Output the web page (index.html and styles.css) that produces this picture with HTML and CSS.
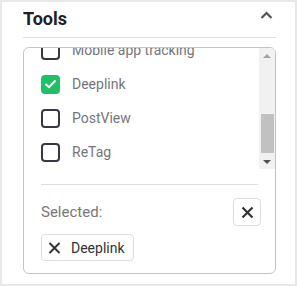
FILE: index.html
```html
<!DOCTYPE html>
<html lang="en">
<head>
    <meta charset="UTF-8">
    <meta name="viewport" content="width=device-width, initial-scale=1.0">
    <title>Tools</title>
    <link rel="stylesheet" href="styles.css">
</head>
<body>

<div class="panel">
    <div class="panel-head">
        <h2>Tools</h2>
        <svg class="chevron" width="13" height="8" viewBox="0 0 13 8">
            <polyline points="1.5,7 6.5,2 11.5,7" fill="none" stroke="#555" stroke-width="2.2"/>
        </svg>
    </div>

    <div class="picker">
        <div class="list-wrap">
            <ul class="options">
                <li><span class="box"></span>Mobile app tracking</li>
                <li><span class="box checked">
                    <svg width="13" height="10" viewBox="0 0 13 10">
                        <polyline points="1.5,5 5,8.2 11.5,1.5" fill="none" stroke="#fff" stroke-width="2"/>
                    </svg>
                </span>Deeplink</li>
                <li><span class="box"></span>PostView</li>
                <li><span class="box"></span>ReTag</li>
            </ul>
            <div class="scrollbar">
                <div class="sb-btn"><span class="arrow-up"></span></div>
                <div class="sb-track"><div class="sb-thumb"></div></div>
                <div class="sb-btn"><span class="arrow-down"></span></div>
            </div>
        </div>

        <div class="picker-foot">
            <div class="sep"></div>
            <div class="selected-row">
                <span class="selected-label">Selected:</span>
                <button class="clear">
                    <svg width="13" height="13" viewBox="0 0 13 13">
                        <path d="M1.5 1.5 L11.5 11.5 M11.5 1.5 L1.5 11.5" stroke="#333" stroke-width="2.2"/>
                    </svg>
                </button>
            </div>
            <div class="chips">
                <span class="chip">
                    <svg width="13" height="12" viewBox="0 0 13 12">
                        <path d="M1.5 1 L11.5 11 M11.5 1 L1.5 11" stroke="#333" stroke-width="2"/>
                    </svg>
                    Deeplink
                </span>
            </div>
        </div>
    </div>
</div>

</body>
</html>
```

FILE: styles.css
```css
body {
    font-family: Roboto, "Liberation Sans", sans-serif;
    margin: 0;
    padding: 0;
    background-color: white;
}

.panel {
    box-sizing: border-box;
    width: 297px;
    height: 286px;
    border: 2px solid #e8e8e8;
    padding: 0 19px 0 21px;
}

.panel-head {
    display: flex;
    justify-content: space-between;
    align-items: flex-start;
    padding: 6px 0 7px;
    border-bottom: 1px solid #e0e0e0;
}

.panel-head h2 {
    margin: 0;
    font-size: 18px;
    line-height: 22px;
    font-weight: bold;
    color: #212121;
}

.chevron {
    margin: 3px 3px 0 0;
}

.picker {
    margin-top: 9px;
    border: 1px solid #c4c4c4;
    border-radius: 6px;
    overflow: hidden;
}

.list-wrap {
    display: flex;
    height: 121px;
    overflow: hidden;
}

.options {
    flex: 1;
    list-style: none;
    margin: -15px 0 0;
    padding: 0 0 0 17px;
}

.options li {
    height: 34px;
    display: flex;
    align-items: center;
    gap: 12px;
    font-size: 14px;
    color: #75757c;
}

.box {
    box-sizing: border-box;
    width: 19px;
    height: 19px;
    border: 2px solid #3b3546;
    border-radius: 4px;
    display: flex;
    align-items: center;
    justify-content: center;
}

.box.checked {
    background-color: #1fc067;
    border-color: #1fc067;
}

.scrollbar {
    width: 16px;
    background-color: #f1f1f1;
    display: flex;
    flex-direction: column;
}

.sb-btn {
    height: 15px;
    display: flex;
    align-items: center;
    justify-content: center;
}

.arrow-up {
    border-left: 4px solid transparent;
    border-right: 4px solid transparent;
    border-bottom: 4px solid #a3a3a3;
}

.arrow-down {
    border-left: 4px solid transparent;
    border-right: 4px solid transparent;
    border-top: 4px solid #505050;
}

.sb-track {
    flex: 1;
}

.sb-thumb {
    margin: 51px 1px 0 2px;
    height: 39px;
    background-color: #c1c1c1;
}

.picker-foot {
    padding: 15px 17px 12px;
}

.sep {
    height: 1px;
    background-color: #ddd;
}

.selected-row {
    margin-top: 13px;
    display: flex;
    justify-content: space-between;
    align-items: center;
}

.selected-label {
    font-size: 15px;
    color: #777;
}

.clear {
    box-sizing: border-box;
    width: 28px;
    height: 28px;
    margin-right: -3px;
    padding: 0;
    border: 1px solid #ddd;
    border-radius: 4px;
    background-color: white;
    display: flex;
    align-items: center;
    justify-content: center;
}

.chips {
    margin-top: 8px;
    display: flex;
}

.chip {
    box-sizing: border-box;
    height: 27px;
    display: inline-flex;
    align-items: center;
    gap: 10px;
    padding: 0 8px 0 6px;
    border: 1px solid #ddd;
    border-radius: 4px;
    font-size: 14px;
    color: #333;
}
```
